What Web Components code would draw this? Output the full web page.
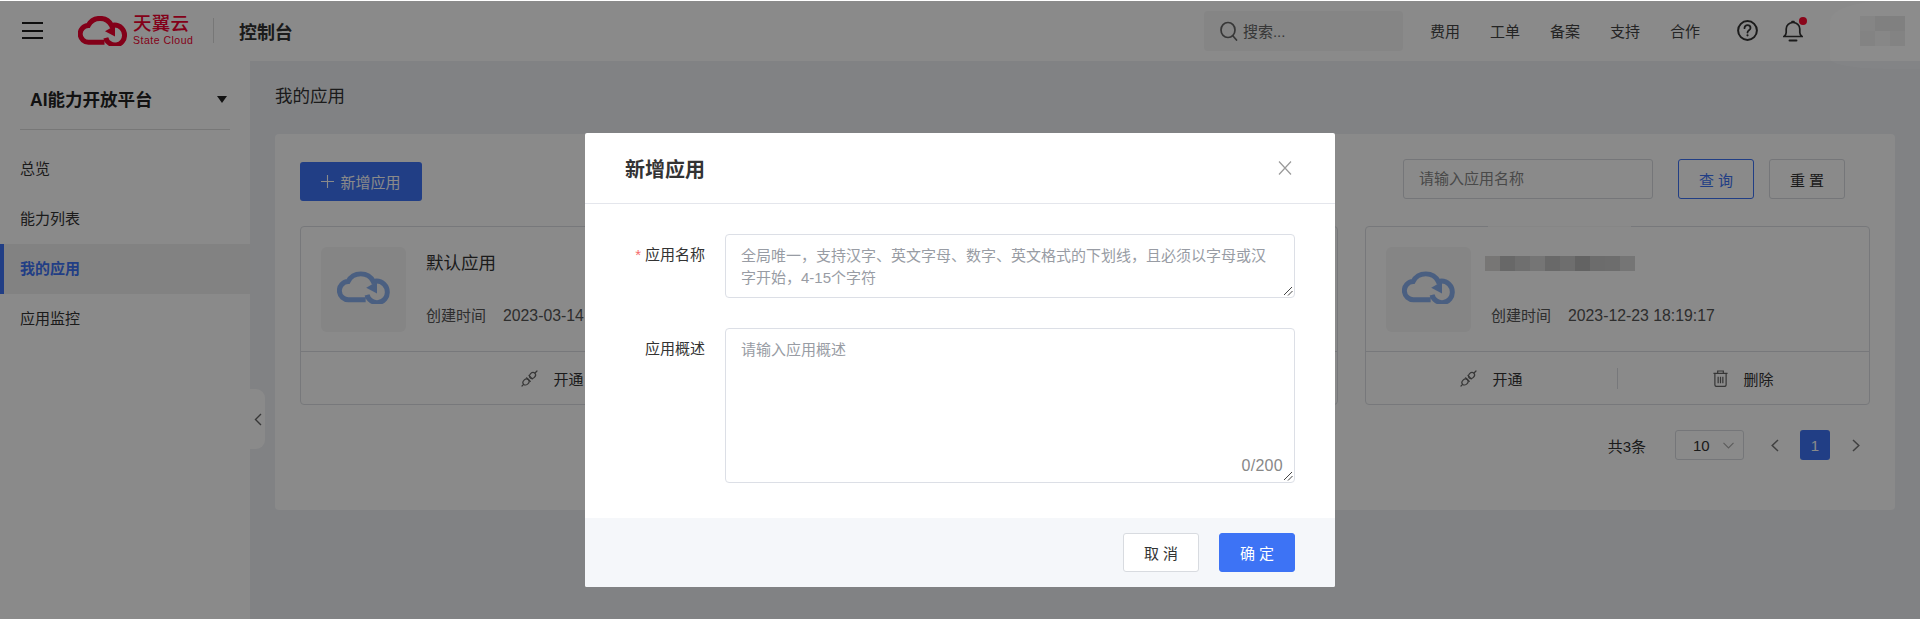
<!DOCTYPE html>
<html lang="zh-CN">
<head>
<meta charset="utf-8">
<title>我的应用</title>
<style>
html,body{margin:0;padding:0;height:619px;overflow:hidden;background:#fff}
body{font-family:"Liberation Sans","Noto Sans CJK SC",sans-serif;font-size:15px;color:#333}
</style>
</head>
<body>
<x-app>
  <x-topbar></x-topbar>
  <x-sidebar slot="side"></x-sidebar>
  <x-page slot="main"></x-page>
  <x-modal slot="modal"></x-modal>
</x-app>
<script>
const FONT='"Liberation Sans","Noto Sans CJK SC",sans-serif';
function def(name,html,init){
  customElements.define(name,class extends HTMLElement{
    connectedCallback(){
      if(this.shadowRoot)return;
      const r=this.attachShadow({mode:'open'});
      r.innerHTML=typeof html==='function'?html(this):html;
      if(init)init(this,r);
    }
  });
}
const cloudSvg=(w,h,s)=>`<svg width="${w}" height="${h}" viewBox="0 0 49 30" fill="none" stroke="currentColor" stroke-width="${s}" stroke-linecap="butt">
<path d="M26.500 26.300H11a8.400 8.400 0 0 1-.8-16.800C12.500 5 17 2.400 22 2.400c5 0 9.500 2.800 11.500 7 1-.3 2-.4 3-.4 5.500 0 10 4.500 10 10a9.500 9.500 0 0 1-18.700 2.800"/>
<path d="M37 9.500v11l-10-5.300z" fill="currentColor" stroke="none"/>
</svg>`;

def('x-cloud',h=>`<style>:host{display:inline-flex;color:inherit}</style>${cloudSvg(h.getAttribute('w')||48,h.getAttribute('h')||30,h.getAttribute('s')||4.2)}`);

def('x-app',`<style>
:host{display:block;position:relative;width:1920px;height:619px;overflow:hidden;background:#eef0f4}
.body{display:flex;height:558px}
.side{flex:0 0 250px}
.main{flex:1;min-width:0}
.mask{position:absolute;left:0;right:0;top:1px;bottom:0;background:rgba(0,0,0,.46)}
.top{display:block}
.halo{position:absolute;left:1830px;top:1px;width:110px;height:68px;pointer-events:none;background:rgba(255,255,255,.02);border-radius:50% 0 0 50%/20px 0 0 10px}
</style>
<div class="top"><slot></slot></div>
<div class="body"><div class="side"><slot name="side"></slot></div><div class="main"><slot name="main"></slot></div></div>
<div class="mask"></div>
<div class="halo"></div>
<slot name="modal"></slot>`);

def('x-topbar',`<style>
:host{display:flex;align-items:center;position:relative;height:61px;background:#fff;padding-left:22px;box-sizing:border-box;font-family:${FONT}}
.burger{width:21px;height:17px;display:flex;flex-direction:column;justify-content:space-between;margin-right:35px}
.burger i{display:block;height:2px;background:#1c1c1c}
.logo{display:flex;align-items:center;color:#f2002f;width:110px}
.ltext{margin-left:6px;display:flex;flex-direction:column;align-items:flex-start;line-height:1}
.ltext b{font-size:18.500px;font-weight:500;letter-spacing:.3px;line-height:18px}
.ltext span{font-size:10.500px;letter-spacing:.5px;line-height:12px;margin-top:1px;white-space:nowrap}
.sep{width:1px;height:25px;background:#dcdcdc;margin:0 25px}
.title{font-size:18px;font-weight:700;color:#333;letter-spacing:-.1px}
.right{margin-left:auto;display:flex;align-items:center;height:100%}
.search{width:199px;height:40px;border-radius:4px;background:#f5f5f5;display:flex;align-items:center;padding-left:16px;box-sizing:border-box;color:#666;margin-right:27px}
.search span{margin-left:5px;font-size:15px;color:#666}
nav{display:flex;gap:30px;font-size:15px;color:#444;margin-right:37px}
.ic{display:flex}
.bell{position:relative;margin-left:25px;margin-right:57px;height:22px}
.bell i{position:absolute;left:16px;top:-3px;width:8px;height:8px;border-radius:50%;background:#ff0a30}
.ava{position:relative;width:45px;height:30px;margin-right:15px;display:grid;grid-template-columns:repeat(3,15px);grid-template-rows:repeat(2,15px)}
.ava i{display:block}
</style>
<div class="burger"><i></i><i></i><i></i></div>
<div class="logo"><x-cloud w="49" h="30" s="5"></x-cloud><div class="ltext"><b>天翼云</b><span>State Cloud</span></div></div>
<div class="sep"></div>
<div class="title">控制台</div>
<div class="right">
  <div class="search"><svg width="18" height="20" viewBox="0 0 18 20" fill="none" stroke="currentColor" stroke-width="1.700"><ellipse cx="8" cy="9" rx="7" ry="7.500"/><path d="M13 15l3.500 4" stroke-linecap="round"/></svg><span>搜索...</span></div>
  <nav><span>费用</span><span>工单</span><span>备案</span><span>支持</span><span>合作</span></nav>
  <div class="ic"><svg width="21" height="21" viewBox="0 0 21 21" fill="none" stroke="#333" stroke-width="2"><circle cx="10.500" cy="10.500" r="9.400"/><path d="M7.500 8.200c0-1.900 1.300-3 3-3s3 1.100 3 2.800c0 2.300-3 2.300-3 4.600" stroke-width="1.800" stroke-linecap="round"/><circle cx="10.500" cy="15.300" r="1.100" fill="#333" stroke="none"/></svg></div>
  <div class="bell"><svg width="20" height="22" viewBox="0 0 20 22" fill="none" stroke="#333" stroke-width="1.700" stroke-linecap="round"><path d="M1 16.500c1.400-1 2.200-2 2.200-4V9c0-3.700 3-6.500 6.800-6.500s6.800 2.800 6.800 6.500v3.500c0 2 .8 3 2.200 4z"/><path d="M9 1.500h2"/><path d="M6.500 20.500h7" stroke-width="1.900"/></svg><i></i></div>
  <div class="ava"><i style="background:#f2f2f2"></i><i style="background:#e9e9e9"></i><i style="background:#e9e9e9"></i><i style="background:#eeeeee"></i><i style="background:#f6f6f6"></i><i style="background:#eeeeee"></i></div>
</div>`);

def('x-sidebar',`<style>
:host{display:block;position:relative;height:100%;background:#fff;font-family:${FONT}}
.head{height:69px;margin:0 20px;border-bottom:1px solid #dcdcdc;display:flex;align-items:center;justify-content:space-between;padding:6px 3px 0 10px;box-sizing:border-box;font-size:17.500px;font-weight:700;color:#222}
.head i{width:0;height:0;border:5.500px solid transparent;border-top:7px solid #222;border-bottom:0;margin-top:2px}
ul{list-style:none;margin:0;padding:14px 0 0}
li{height:50px;line-height:50px;padding-left:20px;font-size:15px;color:#333;box-sizing:border-box}
li.on{background:#f1f1f1;border-left:4px solid #3d73f5;padding-left:16px;color:#3d73f5;font-weight:700}
.fold{position:absolute;left:250px;top:328px;width:15px;height:60px;background:#fff;border-radius:0 9px 9px 0;display:flex;align-items:center;justify-content:center}
</style>
<div class="head"><span>AI能力开放平台</span><i></i></div>
<ul><li>总览</li><li>能力列表</li><li class="on">我的应用</li><li>应用监控</li></ul>
<div class="fold"><svg width="8" height="13" viewBox="0 0 8 13" fill="none" stroke="#666" stroke-width="1.400"><path d="M7 1L1.500 6.500 7 12"/></svg></div>`);

const plug=`<svg width="17" height="17" viewBox="0 0 17 17" fill="none" stroke="#666" stroke-width="1.200" stroke-linecap="round"><ellipse cx="5" cy="12" rx="3.300" ry="2.700" transform="rotate(-45 5 12)"/><ellipse cx="11.500" cy="5.500" rx="3.300" ry="2.700" transform="rotate(-45 11.500 5.500)"/><path d="M1 16l1.600-1.600M14 3l2-2M7 9l2.300 2.300M5.500 7.800L8.800 11M8 5.500l3.300 3.300"/></svg>`;
const trash=`<svg width="15" height="17" viewBox="0 0 16 18" fill="none" stroke="#666" stroke-width="1.300"><path d="M.5 3.500h15M5 3.500V1h6v2.500"/><path d="M2 3.500v12.200c0 1 .6 1.800 1.800 1.800h8.400c1.200 0 1.800-.8 1.800-1.800V3.500"/><path d="M5.500 7v7M8 7v7M10.500 7v7"/></svg>`;

def('x-app-card',h=>{
 const ph=h.hasAttribute('blur');
 return `<style>
:host{display:flex;flex-direction:column;box-sizing:border-box;height:179px;border:1px solid #dcdee3;border-radius:4px;background:#fff;position:relative;min-width:0}
.top{display:flex;height:125px;padding:20px 0 0 20px;box-sizing:border-box;border-bottom:1px solid #dcdee3}
.box{flex:0 0 85px;height:85px;background:#f5f5f5;border-radius:6px;display:flex;align-items:center;justify-content:center;color:#8ab0ef;margin-right:20px}
.box x-cloud{margin-top:-5px}
.info{flex:1;min-width:0}
.name{font-size:17.500px;line-height:24px;height:24px;margin-top:4px;color:#333}
.meta{margin-top:30px;line-height:22px;font-size:15px;color:#555;white-space:nowrap;display:flex}
.meta b{font-weight:400;font-size:15.800px;margin-left:17px}
.foot{flex:1;display:flex;align-items:center}
.col{flex:1;display:flex;align-items:center;justify-content:center;gap:15px;font-size:15px;color:#333}
.div{width:1px;height:21px;background:#dcdee3}
.mos{position:absolute;left:119px;top:29px;display:grid;grid-template-columns:repeat(10,15px);grid-template-rows:15px}
.mos i{display:block}
.haze{position:absolute;left:122px;top:-1px;width:143px;height:1px;background:#f8f8f8}
</style>
<div class="top"><div class="box"><x-cloud w="53" h="33" s="4.600"></x-cloud></div>
<div class="info"><div class="name"><slot name="name"></slot></div><div class="meta"><span>创建时间</span><b>${h.getAttribute('date')||''}</b></div></div></div>
<div class="foot"><div class="col">${plug}<span>开通</span></div>${h.hasAttribute('del')?`<div class="div"></div><div class="col">${trash}<span>删除</span></div>`:''}</div>
${ph?`<div class="haze"></div><div class="mos">${['#dcdad8','#c1c1c1','#cdcdcd','#d8d8d8','#c3c3c3','#cbcbcb','#b7b7b7','#c8c8c8','#c9c9c9','#d8d8d8'].map(c=>`<i style="background:${c}"></i>`).join('')}</div>`:''}`;
});

def('x-btn',h=>`<style>
:host{display:inline-flex;align-items:center;justify-content:center;box-sizing:border-box;height:40px;width:76px;border:1px solid #d8dbe0;border-radius:3px;background:#fff;color:#333;font-size:15px;white-space:pre}
:host([kind=line]){border-color:#3d73f5;color:#3d73f5}
:host([kind=fill]){background:#3d73f5;border-color:#3d73f5;color:#fff}
</style><slot></slot>`);

def('x-pager',`<style>
:host{display:flex;align-items:center;justify-content:flex-end;height:30px;font-size:15px;color:#333;padding-right:10px}
.sel{width:69px;height:30px;box-sizing:border-box;border:1px solid #d8dbe0;border-radius:3px;margin:0 27px 0 29px;display:flex;align-items:center;padding-left:17px;gap:13px}
.cur{width:30px;height:30px;background:#3d73f5;color:#fff;border-radius:3px;display:flex;align-items:center;justify-content:center;margin:0 22px 0 21px}
svg{display:block}
</style>
<span>共3条</span>
<div class="sel"><span>10</span><svg width="11" height="7" viewBox="0 0 11 7" fill="none" stroke="#aaa" stroke-width="1.100"><path d="M.5 .8L5.500 6 10.500 .8"/></svg></div>
<svg width="8" height="13" viewBox="0 0 8 13" fill="none" stroke="#777" stroke-width="1.500"><path d="M7 1L1.200 6.500 7 12"/></svg>
<div class="cur">1</div>
<svg width="8" height="13" viewBox="0 0 8 13" fill="none" stroke="#777" stroke-width="1.500"><path d="M1 1l5.800 5.500L1 12"/></svg>`);

def('x-page',`<style>
:host{display:block;font-family:${FONT};padding:0 25px}
h1{margin:0;padding:23px 0 26px;font-size:17.500px;line-height:24px;font-weight:400;color:#333}
.panel{background:#fff;border-radius:4px;height:376px;padding:25px;box-sizing:border-box}
.bar{display:flex;align-items:flex-start;height:42px;margin-bottom:25px}
.add{margin-top:3px;width:122px;height:39px;background:#3d73f5;color:#fff;border-radius:3px;display:flex;align-items:center;justify-content:center;gap:6px;font-size:15px}
.filter{margin-left:auto;display:flex;gap:15px;padding-right:25px}
.inp{width:250px;height:40px;box-sizing:border-box;border:1px solid #d8dbe0;border-radius:3px;padding-left:15px;line-height:38px;color:#888;font-size:15px;margin-right:10px}
.grid{display:grid;grid-template-columns:repeat(3,1fr);gap:27.500px;margin-bottom:25px}
</style>
<h1>我的应用</h1>
<div class="panel">
  <div class="bar">
    <div class="add"><svg width="13" height="13" viewBox="0 0 13 13" stroke="#fff" stroke-width="1.100"><path d="M6.500 0v13M0 6.500h13"/></svg><span>新增应用</span></div>
    <div class="filter"><div class="inp">请输入应用名称</div><x-btn kind="line">查 询</x-btn><x-btn>重 置</x-btn></div>
  </div>
  <div class="grid">
    <x-app-card date="2023-03-14 16:21:08"><span slot="name">默认应用</span></x-app-card>
    <x-app-card del></x-app-card>
    <x-app-card del blur date="2023-12-23 18:19:17"></x-app-card>
  </div>
  <x-pager></x-pager>
</div>`);

def('x-field',h=>`<style>
:host{display:flex;font-size:15px;color:#333}
label{flex:0 0 140px;box-sizing:border-box;text-align:right;padding:10px 20px 0 0;line-height:22px;white-space:nowrap}
label i{color:#f56c6c;font-style:normal;margin-right:4px}
.ta{position:relative;box-sizing:border-box;width:570px;height:${h.getAttribute('hh')}px;border:1px solid #dcdfe6;border-radius:4px;padding:10px 15px;font-size:15px;line-height:22px;color:#989ca4}
.n{position:absolute;right:11px;bottom:6px;color:#888;font-size:16px;line-height:20px;letter-spacing:.3px}
svg{position:absolute;right:1px;bottom:1px}
</style>
<label>${h.hasAttribute('req')?'<i>*</i>':''}${h.getAttribute('label')}</label>
<div class="ta"><slot></slot>${h.getAttribute('count')?`<span class="n">${h.getAttribute('count')}</span>`:''}<svg width="10" height="10" viewBox="0 0 10 10" stroke="#444" stroke-width="1"><path d="M9 1L1 9M9.500 5L5 9.500"/></svg></div>`);

def('x-modal',`<style>
:host{position:absolute;left:585px;top:133px;width:750px;height:454px;background:#fff;border-radius:2px;display:flex;flex-direction:column;font-family:${FONT};color:#333}
header{height:71px;box-sizing:border-box;border-bottom:1px solid #e4e6ec;display:flex;align-items:center;justify-content:space-between;padding:0 43px 0 40px}
h2{margin:0;font-size:20px;font-weight:700;color:#333}
.form{flex:1;display:flex;flex-direction:column;gap:30px;padding-top:30px}
footer{height:69px;background:#f5f7fa;display:flex;align-items:center;justify-content:flex-end;gap:20px;padding-right:40px;border-radius:0 0 2px 2px}
footer x-btn{height:39px}
</style>
<header><h2>新增应用</h2><svg width="14" height="14" viewBox="0 0 14 14" stroke="#999" stroke-width="1.200" fill="none"><path d="M1 .5l12 13M13 .5L1 13.500"/></svg></header>
<div class="form">
 <x-field req label="应用名称" hh="64">全局唯一，支持汉字、英文字母、数字、英文格式的下划线，且必须以字母或汉字开始，4-15个字符</x-field>
 <x-field label="应用概述" hh="155" count="0/200">请输入应用概述</x-field>
</div>
<footer><x-btn>取 消</x-btn><x-btn kind="fill">确 定</x-btn></footer>`);
</script>
</body>
</html>
